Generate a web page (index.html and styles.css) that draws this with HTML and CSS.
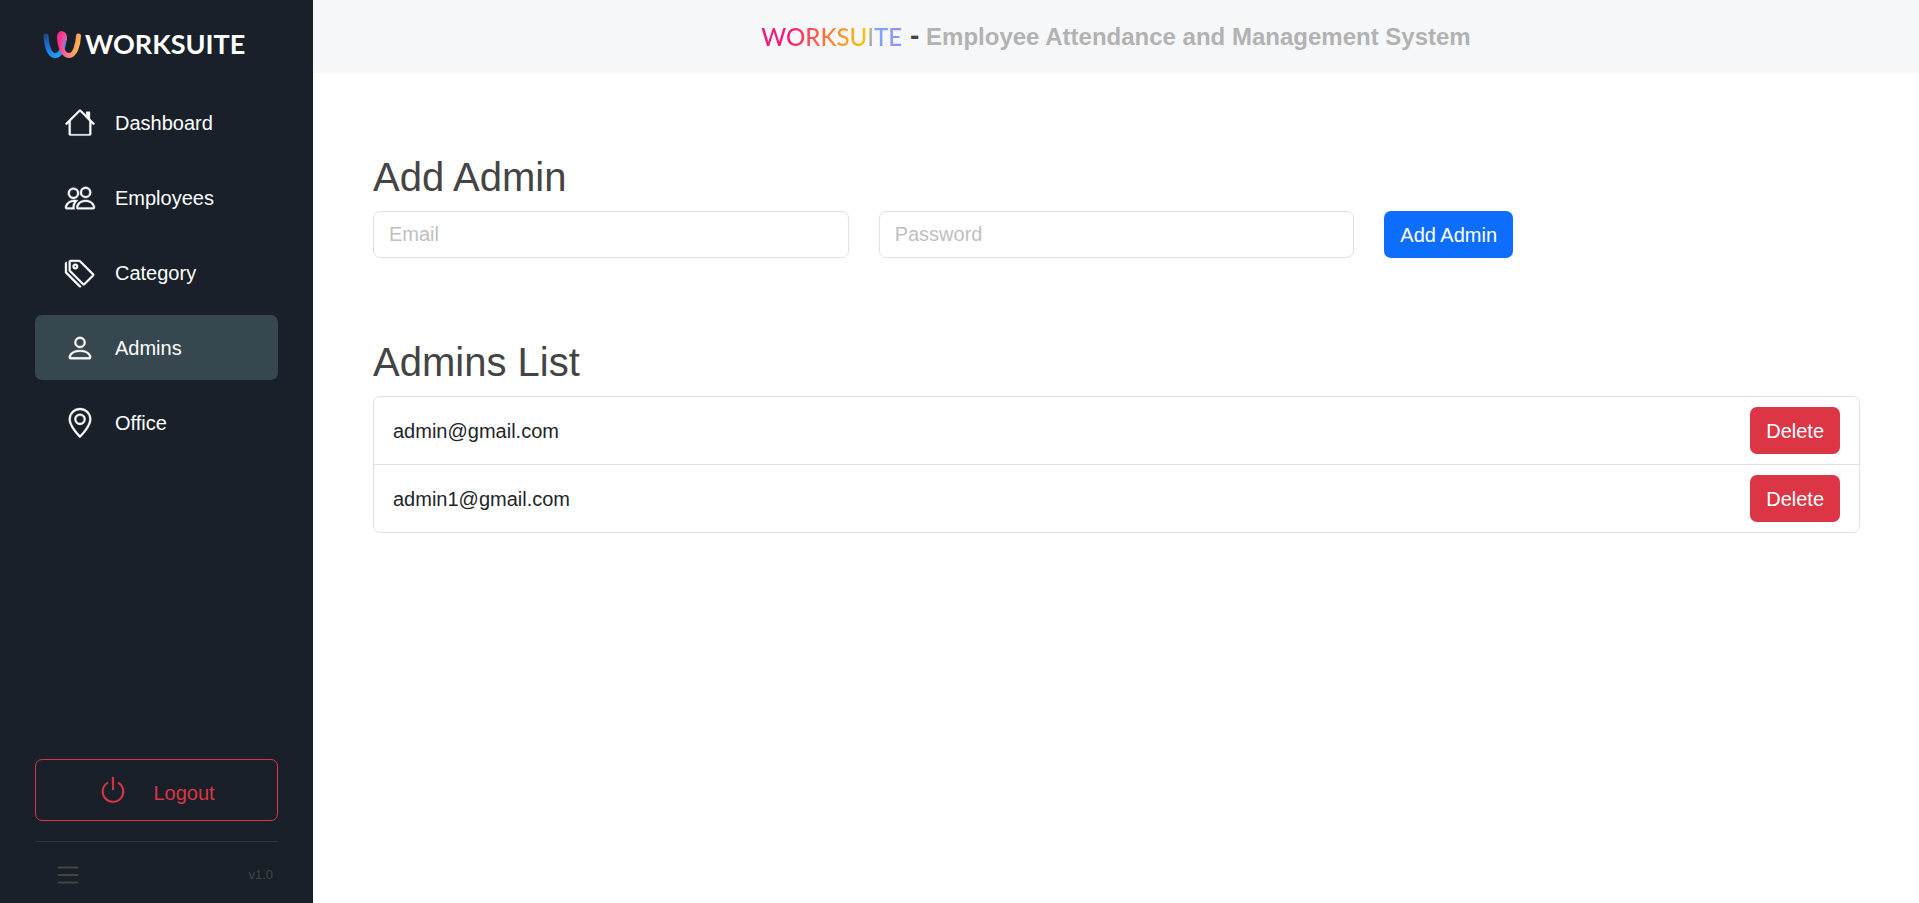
FILE: index.html
```html
<!DOCTYPE html>
<html lang="en">
<head>
<meta charset="utf-8">
<meta name="viewport" content="width=device-width, initial-scale=1">
<title>Worksuite - Admins</title>
<link rel="stylesheet" href="styles.css">
</head>
<body>
<div class="app">
  <aside class="sidebar">
    <a class="brand" href="#">
      <svg class="brand-mark" viewBox="0 0 38 27" aria-hidden="true">
        <defs>
          <linearGradient id="blue" gradientUnits="userSpaceOnUse" x1="3" y1="3" x2="16" y2="25">
            <stop offset="0" stop-color="#27457e"/><stop offset=".5" stop-color="#1976e6"/><stop offset="1" stop-color="#1da1fb"/>
          </linearGradient>
          <linearGradient id="pink" gradientUnits="userSpaceOnUse" x1="17" y1="6" x2="36" y2="10">
            <stop offset="0" stop-color="#fb2e8d"/><stop offset=".5" stop-color="#fb7096"/><stop offset="1" stop-color="#ffb347"/>
          </linearGradient>
        </defs>
        <path d="M3 5C3.500 14 6 24.500 12 24.500S20.500 16 21.500 7" fill="none" stroke="url(#blue)" stroke-width="5" stroke-linecap="round"/>
        <path d="M21.500 8C22 1 16 1 16.500 7C17 15 20 24.500 26 24.500S35 14 35.500 5" fill="none" stroke="url(#pink)" stroke-width="5" stroke-linecap="round"/>
        <path d="M20 15Q21 11 21.500 7" fill="none" stroke="#c661b4" stroke-width="3.500" stroke-linecap="round"/>
      </svg>
      <span class="brand-name">WORKSUITE</span>
    </a>
    <nav class="nav">
      <a class="nav-item" href="#">
        <svg class="icon icon-bold" viewBox="0 0 16 16" aria-hidden="true"><path d="M2 13.500V7h1v6.500a.5.5 0 0 0 .5.5h9a.5.5 0 0 0 .5-.5V7h1v6.500a1 1 0 0 1-1 1.200H3A1 1 0 0 1 2 13.500"/><path d="M13.300 2v5l-2-2V2z"/><path d="M7.293 1.200a1 1 0 0 1 1.414 0l6.847 6.846a.5.5 0 0 1-.708.708L8 1.907 1.154 8.754a.5.5 0 1 1-.708-.708z"/></svg>
        <span>Dashboard</span>
      </a>
      <a class="nav-item" href="#">
        <svg class="icon icon-bold" viewBox="0 0 16 16" aria-hidden="true"><path d="M15 14s1 0 1-1-1-4-5-4-5 3-5 4 1 1 1 1zm-7.978-1L7 12.996c.001-.264.167-1.03.76-1.72C8.312 10.629 9.282 10 11 10c1.717 0 2.687.63 3.240 1.276.593.69.758 1.457.76 1.720l-.008.002-.014.002zM11 7a2 2 0 1 0 0-4 2 2 0 0 0 0 4m3-2a3 3 0 1 1-6 0 3 3 0 0 1 6 0M6.936 9.280a6 6 0 0 0-1.230-.247A7 7 0 0 0 5 9c-4 0-5 3-5 4q0 1 1 1h4.216A2.240 2.240 0 0 1 5 13c0-1.010.377-2.042 1.090-2.904.243-.294.54-.567.846-.816M4.920 10A5.500 5.500 0 0 0 4 13H1c0-.26.164-1.030.76-1.724.545-.636 1.492-1.256 3.160-1.275ZM1.500 5.500a3 3 0 1 1 6 0 3 3 0 0 1-6 0m3-2a2 2 0 1 0 0 4 2 2 0 0 0 0-4"/></svg>
        <span>Employees</span>
      </a>
      <a class="nav-item" href="#">
        <svg class="icon icon-bold" viewBox="0 0 16 16" aria-hidden="true"><path d="M3 2v4.586l7 7L14.586 9l-7-7zM2 2a1 1 0 0 1 1-1h4.586a1 1 0 0 1 .707.293l7 7a1 1 0 0 1 0 1.414l-4.586 4.586a1 1 0 0 1-1.414 0l-7-7A1 1 0 0 1 2 6.586z"/><path d="M5.500 5a.5.5 0 1 1 0-1 .5.5 0 0 1 0 1m0 1a1.500 1.500 0 1 0 0-3 1.500 1.500 0 0 0 0 3M1 7.086a1 1 0 0 0 .293.707L8.750 15.250l-.043.043a1 1 0 0 1-1.414 0l-7-7A1 1 0 0 1 0 7.586V3a1 1 0 0 1 1-1z"/></svg>
        <span>Category</span>
      </a>
      <a class="nav-item nav-item-active" href="#" aria-current="page">
        <svg class="icon icon-bold" viewBox="0 0 16 16" aria-hidden="true"><path d="M8 8a3 3 0 1 0 0-6 3 3 0 0 0 0 6m2-3a2 2 0 1 1-4 0 2 2 0 0 1 4 0m4 8c0 1-1 1-1 1H3s-1 0-1-1 1-4 6-4 6 3 6 4m-1-.004c-.001-.246-.154-.986-.832-1.664C11.516 10.680 10.289 10 8 10s-3.516.68-4.168 1.332c-.678.678-.83 1.418-.832 1.664z"/></svg>
        <span>Admins</span>
      </a>
      <a class="nav-item" href="#">
        <svg class="icon icon-bold" viewBox="0 0 16 16" aria-hidden="true"><path d="M12.166 8.940c-.524 1.062-1.234 2.120-1.960 3.070A32 32 0 0 1 8 14.580a32 32 0 0 1-2.206-2.570c-.726-.95-1.436-2.008-1.960-3.070C3.304 7.867 3 6.862 3 6a5 5 0 0 1 10 0c0 .862-.305 1.867-.834 2.940M8 16s6-5.686 6-10A6 6 0 0 0 2 6c0 4.314 6 10 6 10"/><path d="M8 8a2 2 0 1 1 0-4 2 2 0 0 1 0 4m0 1a3 3 0 1 0 0-6 3 3 0 0 0 0 6"/></svg>
        <span>Office</span>
      </a>
    </nav>
    <div class="sidebar-bottom">
      <button class="logout" type="button">
        <svg class="icon" viewBox="0 0 16 16" aria-hidden="true"><path d="M7.500 1v7h1V1z"/><path d="M3 8.812a5 5 0 0 1 2.578-4.375l-.485-.874A6 6 0 1 0 11 3.616l-.501.865A5 5 0 1 1 3 8.812"/></svg>
        <span class="logout-label">Logout</span>
      </button>
      <div class="sidebar-footer">
        <button class="menu-toggle" type="button" aria-label="Toggle menu">
          <svg class="icon" viewBox="0 0 16 16" aria-hidden="true"><path d="M2.500 12a.5.5 0 0 1 .5-.5h10a.5.5 0 0 1 0 1H3a.5.5 0 0 1-.5-.5m0-4a.5.5 0 0 1 .5-.5h10a.5.5 0 0 1 0 1H3a.5.5 0 0 1-.5-.5m0-4a.5.5 0 0 1 .5-.5h10a.5.5 0 0 1 0 1H3a.5.5 0 0 1-.5-.5"/></svg>
        </button>
        <span class="version">v1.0</span>
      </div>
    </div>
  </aside>
  <div class="page">
    <header class="topbar">
      <span class="topbar-brand">WORKSUITE</span>
      <span class="topbar-title"><span class="dash">-</span> Employee Attendance and Management System</span>
    </header>
    <main class="content">
      <section>
        <h1 class="heading">Add Admin</h1>
        <form class="add-form">
          <input class="field" type="email" placeholder="Email" aria-label="Email">
          <input class="field" type="password" placeholder="Password" aria-label="Password">
          <button class="btn btn-primary" type="button">Add Admin</button>
        </form>
      </section>
      <section>
        <h2 class="heading">Admins List</h2>
        <ul class="list">
          <li class="list-row"><span>admin@gmail.com</span><button class="btn btn-danger" type="button">Delete</button></li>
          <li class="list-row"><span>admin1@gmail.com</span><button class="btn btn-danger" type="button">Delete</button></li>
        </ul>
      </section>
    </main>
  </div>
</div>
</body>
</html>
```
FILE: styles.css
```css
* { box-sizing: border-box; }

body {
  margin: 0;
  font: 20px/30px "Liberation Sans", Arial, sans-serif;
  color: #444;
  background: #fff;
}

button, input { font: inherit; }

.app { display: flex; min-height: 100vh; }

.sidebar {
  display: flex;
  flex-direction: column;
  flex: none;
  width: 313px;
  padding: 28px 35px 13px;
  background: #192029;
}

.brand {
  display: flex;
  align-items: center;
  gap: 4px;
  height: 32px;
  margin: 0 0 30px 8px;
  color: #fff;
  text-decoration: none;
}

.brand-mark { flex: none; width: 38px; height: 27px; }

.brand-name { font: bold 27px/32px Lato, sans-serif; }

.nav { display: flex; flex-direction: column; gap: 10px; }

.nav-item {
  display: flex;
  align-items: center;
  gap: 20px;
  height: 65px;
  padding: 0 30px;
  border-radius: 7px;
  color: #fff;
  text-decoration: none;
}

.nav-item-active { background: #37474f; }

.icon { display: block; flex: none; width: 30px; height: 30px; fill: currentColor; overflow: visible; }

.icon-bold { stroke: currentColor; stroke-width: 0.2; }

.sidebar-bottom { margin-top: auto; }

.logout {
  display: flex;
  align-items: center;
  justify-content: center;
  gap: 25px;
  width: 100%;
  height: 62px;
  border: 1px solid #dc3545;
  border-radius: 7px;
  background: transparent;
  color: #dc3545;
}

.logout .icon { stroke: currentColor; stroke-width: 0.1; }

.logout-label { padding-top: 5px; }

.sidebar-footer {
  display: flex;
  align-items: center;
  justify-content: space-between;
  margin-top: 20px;
  padding: 18px 5px 0 18px;
  border-top: 1px solid #303438;
  color: #444;
}

.menu-toggle { padding: 0; border: 0; background: transparent; color: inherit; }

.version { font-size: 13px; }

.page { flex: 1; min-width: 0; }

.topbar {
  display: flex;
  align-items: center;
  justify-content: center;
  gap: 8px;
  height: 73px;
  background: #f5f7f9;
}

.topbar-brand {
  font: 500 24px/30px Lato, sans-serif;
  color: transparent;
  background: linear-gradient(100deg, #e91e8c, #ff1a6c 22%, #ff7043 45%, #ffc107 72%, #7aa5ff 80%, #9a8cff);
  background-clip: text;
}

.topbar-title { font-size: 24px; font-weight: bold; color: #b2b2b2; }

.dash { font-size: 28px; color: #444; }

.content {
  display: flex;
  flex-direction: column;
  gap: 80px;
  padding: 80px 59px 80px 60px;
}

.heading { margin: 0 0 10px; font-size: 40px; font-weight: normal; line-height: 48px; }

.add-form {
  display: grid;
  grid-template-columns: repeat(3, minmax(0, 1fr));
  justify-items: start;
  gap: 30px;
}

.field {
  width: 100%;
  height: 47px;
  padding: 0 15px;
  border: 1px solid #dee2e6;
  border-radius: 7px;
  background: #fff;
  color: #444;
}

.field::placeholder { color: #bfbfbf; opacity: 1; }

.btn {
  height: 47px;
  padding: 0 16px;
  border: 0;
  border-radius: 7px;
  color: #fff;
}

.btn-primary { background: #0d6efd; }

.btn-danger { background: #dc3545; }

.list {
  margin: 0;
  padding: 0;
  list-style: none;
  border: 1px solid #dee2e6;
  border-radius: 7px;
  color: #212529;
}

.list-row {
  display: flex;
  align-items: center;
  justify-content: space-between;
  padding: 10px 19px;
}

.list-row + .list-row { border-top: 1px solid #dee2e6; }
```
